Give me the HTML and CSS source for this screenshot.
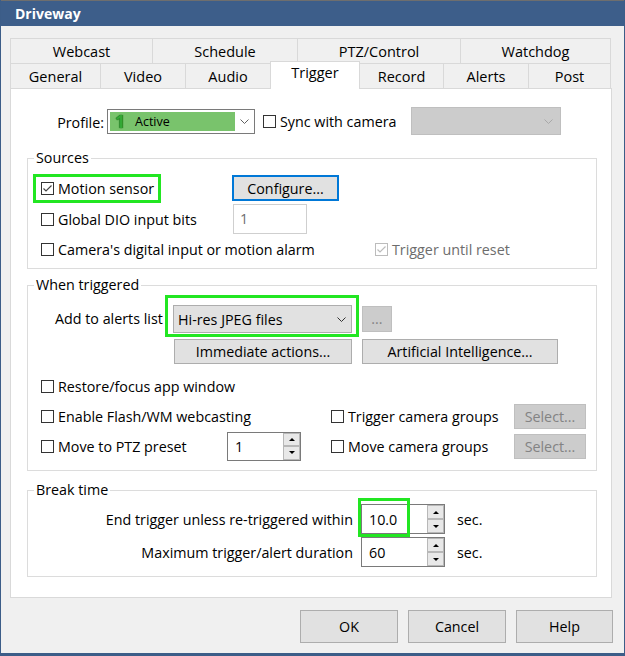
FILE: index.html
```html
<!DOCTYPE html>
<html lang="en">
<head>
  <meta charset="UTF-8">
  <title>Driveway</title>
  <link rel="stylesheet" href="styles.css">
</head>
<body>
  <div class="window">
    <div class="titlebar">Driveway</div>

    <div class="client">
      <div class="tabs">
        <div class="tab-row">
          <div class="tab w-webcast">Webcast</div>
          <div class="tab w-schedule">Schedule</div>
          <div class="tab w-ptz">PTZ/Control</div>
          <div class="tab w-watchdog">Watchdog</div>
        </div>
        <div class="tab-row">
          <div class="tab w-general">General</div>
          <div class="tab w-video">Video</div>
          <div class="tab w-audio">Audio</div>
          <div class="tab w-trigger active">Trigger</div>
          <div class="tab w-record">Record</div>
          <div class="tab w-alerts">Alerts</div>
          <div class="tab w-post">Post</div>
        </div>
      </div>

      <div class="panel">
        <div class="profile-row">
          <span class="profile-label">Profile:</span>
          <div class="combo profile-combo">
            <div class="profile-fill">
              <span class="profile-num">1</span>
              <span class="profile-name">Active</span>
            </div>
            <span class="combo-arrow">
              <svg width="9" height="5" viewBox="0 0 9 5"><polyline points="0.5,0.5 4.5,4.5 8.5,0.5" fill="none" stroke="#606060"/></svg>
            </span>
          </div>
          <label class="check sync-check"><span class="box"></span>Sync with camera</label>
          <div class="combo combo-disabled">
            <span class="combo-arrow">
              <svg width="9" height="5" viewBox="0 0 9 5"><polyline points="0.5,0.5 4.5,4.5 8.5,0.5" fill="none" stroke="#a8a8a8"/></svg>
            </span>
          </div>
        </div>

        <fieldset class="group sources">
          <legend>Sources</legend>
          <div class="row row-motion">
            <div class="highlight-box motion-box">
              <label class="check">
                <span class="box checked">
                  <svg width="11" height="11" viewBox="0 0 11 11"><polyline points="1.5,5.5 4,8 9.5,2.5" fill="none" stroke="#444" stroke-width="1.2"/></svg>
                </span>Motion sensor
              </label>
            </div>
            <button class="btn btn-focus configure-btn">Configure...</button>
          </div>
          <div class="row row-dio">
            <label class="check col-dio"><span class="box"></span>Global DIO input bits</label>
            <div class="textbox">1</div>
          </div>
          <div class="row row-camera">
            <label class="check col-camera"><span class="box"></span>Camera's digital input or motion alarm</label>
            <label class="check disabled">
              <span class="box checked">
                <svg width="11" height="11" viewBox="0 0 11 11"><polyline points="1.5,5.5 4,8 9.5,2.5" fill="none" stroke="#bcbcbc" stroke-width="1.2"/></svg>
              </span>Trigger until reset
            </label>
          </div>
        </fieldset>

        <fieldset class="group triggered">
          <legend>When triggered</legend>
          <div class="row row-alerts">
            <span class="alerts-label">Add to alerts list</span>
            <div class="alerts-wrap">
              <div class="combo alerts-combo">
                <span class="combo-text">Hi-res JPEG files</span>
                <span class="combo-arrow">
                  <svg width="9" height="5" viewBox="0 0 9 5"><polyline points="0.5,0.5 4.5,4.5 8.5,0.5" fill="none" stroke="#333"/></svg>
                </span>
              </div>
              <span class="highlight-overlay alerts-overlay"></span>
            </div>
            <button class="btn btn-disabled dots-btn">...</button>
          </div>
          <div class="row row-actions">
            <button class="btn immediate-btn">Immediate actions...</button>
            <button class="btn ai-btn">Artificial Intelligence...</button>
          </div>
          <div class="row row-check row-restore">
            <label class="check"><span class="box"></span>Restore/focus app window</label>
          </div>
          <div class="row row-check">
            <label class="check col-flash"><span class="box"></span>Enable Flash/WM webcasting</label>
            <label class="check col-groups"><span class="box"></span>Trigger camera groups</label>
            <button class="btn btn-disabled select-btn">Select...</button>
          </div>
          <div class="row row-check">
            <label class="check col-ptz"><span class="box"></span>Move to PTZ preset</label>
            <div class="spin ptz-spin">
              <span class="spin-value">1</span>
              <span class="spin-buttons"><span class="spin-btn up"></span><span class="spin-btn down"></span></span>
            </div>
            <label class="check col-groups groups-gap"><span class="box"></span>Move camera groups</label>
            <button class="btn btn-disabled select-btn">Select...</button>
          </div>
        </fieldset>

        <fieldset class="group break">
          <legend>Break time</legend>
          <div class="row row-break">
            <span class="break-label">End trigger unless re-triggered within</span>
            <div class="spin break-spin">
              <span class="spin-value">10.0</span>
              <span class="spin-buttons"><span class="spin-btn up"></span><span class="spin-btn down"></span></span>
              <span class="highlight-overlay break-overlay"></span>
            </div>
            <span class="unit">sec.</span>
          </div>
          <div class="row row-break second">
            <span class="break-label">Maximum trigger/alert duration</span>
            <div class="spin break-spin">
              <span class="spin-value">60</span>
              <span class="spin-buttons"><span class="spin-btn up"></span><span class="spin-btn down"></span></span>
            </div>
            <span class="unit">sec.</span>
          </div>
        </fieldset>
      </div>

      <div class="dialog-buttons">
        <button class="btn dialog-btn">OK</button>
        <button class="btn dialog-btn">Cancel</button>
        <button class="btn dialog-btn help-btn">Help</button>
      </div>
    </div>
  </div>
</body>
</html>
```

FILE: styles.css
```css
* {
  box-sizing: border-box;
}

body {
  margin: 0;
  font-family: "Open Sans", "Noto Sans", sans-serif;
  font-size: 14.3px;
  color: #000;
  background: #fff;
}

.window {
  width: 625px;
  height: 656px;
  background: #f0f0f0;
  border: 1px solid #3c5d88;
  border-top: 0;
  border-bottom-width: 3px;
}

.titlebar {
  height: 26px;
  background: #3d5e8a;
  border-top: 1px solid #6e6e6e;
  color: #fff;
  font-weight: 700;
  font-size: 14px;
  padding-left: 14px;
  line-height: 25px;
}

.client {
  padding: 12px 10px 0 9px;
}

/* tabs */
.tab-row {
  display: flex;
  height: 25px;
}

.tab {
  border: 1px solid #d9d9d9;
  border-bottom: 0;
  border-right: 0;
  text-align: center;
  line-height: 25px;
  font-size: 14.5px;
}

.tab:last-child {
  border-right: 1px solid #d9d9d9;
}

.tab.active {
  position: relative;
  z-index: 1;
  height: 28px;
  margin-top: -2px;
  margin-right: -1px;
  background: #fff;
  border-right: 1px solid #d9d9d9;
  line-height: 22px;
}

.w-webcast { width: 142px; }
.w-schedule { width: 145px; }
.w-ptz { width: 163px; }
.w-watchdog { width: 151px; }
.w-general { width: 90px; }
.w-video { width: 85px; }
.w-audio { width: 85px; }
.w-trigger { width: 90px; }
.w-record { width: 84px; }
.w-alerts { width: 85px; }
.w-post { width: 83px; }

.panel {
  width: 602px;
  height: 510px;
  background: #fff;
  border: 1px solid #d9d9d9;
  padding: 18px 14px 0 16px;
}

/* common controls */
.row {
  display: flex;
  align-items: center;
}

.check {
  display: flex;
  align-items: center;
  white-space: nowrap;
}

.box {
  width: 13px;
  height: 13px;
  border: 1px solid #333;
  background: #fff;
  margin-right: 4px;
  display: flex;
  align-items: center;
  justify-content: center;
  flex: none;
}

.check.disabled {
  color: #6d6d6d;
}

.check.disabled .box {
  border-color: #bcbcbc;
}

.btn {
  font: inherit;
  color: #000;
  background: #e1e1e1;
  border: 1px solid #adadad;
  padding: 0;
  height: 25px;
  white-space: nowrap;
}

.btn-focus {
  border: 2px solid #0078d7;
}

.btn-disabled {
  background: #cccccc;
  border-color: #bfbfbf;
  color: #838383;
}

.combo {
  display: flex;
  align-items: center;
  border: 1px solid #adadad;
}

.combo-arrow {
  width: 19px;
  display: flex;
  align-items: center;
  justify-content: center;
  margin-left: auto;
}

.highlight-box {
  border: 3px solid #22e622;
}

.highlight-overlay {
  position: absolute;
  border: 3px solid #22e622;
  pointer-events: none;
}

/* profile row */
.profile-row {
  display: flex;
  align-items: center;
  height: 28px;
}

.profile-label {
  width: 77px;
  margin-right: 3px;
  text-align: right;
  padding-top: 2px;
}

.profile-combo {
  width: 148px;
  height: 25px;
  border-color: #7a7a7a;
  background: #fff;
  padding: 2px 0 2px 2px;
}

.profile-fill {
  width: 125px;
  height: 19px;
  background: #79c36c;
  display: flex;
  align-items: center;
}

.profile-num {
  width: 25px;
  padding-left: 5px;
  font-weight: 700;
  font-size: 18px;
  line-height: 19px;
  color: #35a835;
  text-shadow: 0 0 1px #0d5a0d, 0 0 1px #0d5a0d;
}

.profile-name {
  font-size: 12.5px;
}

.sync-check {
  margin-left: 8px;
  width: 148px;
}

.combo-disabled {
  width: 150px;
  height: 28px;
  background: #cccccc;
  border-color: #bfbfbf;
  padding-right: 2px;
}

/* group boxes */
.group {
  margin: 0;
  padding: 0;
  width: 570px;
  min-width: 0;
  border: 1px solid #dcdcdc;
}

.group legend {
  margin-left: 6px;
  padding: 0 2px;
  line-height: 20px;
}

.sources {
  margin-top: 13px;
  padding: 5px 0;
}

.row-motion {
  height: 30px;
}

.motion-box {
  width: 128px;
  height: 29px;
  margin-left: 5px;
  padding-left: 5px;
  padding-top: 1px;
  display: flex;
  align-items: center;
}

.configure-btn {
  margin-left: 71px;
  width: 107px;
  height: 26px;
}

.row-dio {
  height: 32px;
}

.col-dio {
  width: 204px;
  padding-left: 13px;
}

.textbox {
  width: 74px;
  height: 30px;
  margin-left: 1px;
  border: 1px solid #cfcfcf;
  color: #6d6d6d;
  padding-left: 6px;
  line-height: 27px;
}

.row-camera {
  height: 28px;
  padding-top: 1px;
}

.col-camera {
  width: 347px;
  padding-left: 13px;
}

.triggered {
  margin-top: 6px;
  padding: 0 0 9px;
}

.row-alerts {
  height: 42px;
  align-items: flex-start;
  padding-left: 27px;
}

.alerts-label {
  width: 110px;
  white-space: nowrap;
  margin-top: 14px;
  line-height: 20px;
}

.alerts-wrap {
  position: relative;
  margin-left: 8px;
  margin-top: 10px;
}

.alerts-combo {
  width: 179px;
  height: 28px;
  background: #e1e1e1;
  padding-left: 4px;
}

.alerts-combo .combo-arrow {
  width: 20px;
}

.alerts-overlay {
  left: -8px;
  top: -10px;
  width: 194px;
  height: 42px;
}

.dots-btn {
  margin-left: 10px;
  margin-top: 11px;
  width: 30px;
  height: 26px;
  line-height: 18px;
}

.row-actions {
  margin-top: 2px;
  height: 25px;
  padding-left: 146px;
}

.immediate-btn {
  width: 178px;
}

.ai-btn {
  width: 196px;
  margin-left: 10px;
}

.row-check {
  height: 30px;
  padding-left: 13px;
}

.row-restore {
  margin-top: 7px;
}

.col-flash {
  width: 290px;
}

.col-groups {
  width: 183px;
}

.col-ptz {
  width: 186px;
}

.groups-gap {
  margin-left: 30px;
}

.select-btn {
  width: 72px;
}

.spin {
  position: relative;
  display: flex;
  border: 1px solid #7a7a7a;
  background: #fff;
}

.spin-value {
  flex: 1;
  padding-left: 7px;
  display: flex;
  align-items: center;
}

.spin-buttons {
  width: 17px;
  display: flex;
  flex-direction: column;
}

.spin-btn {
  flex: 1;
  background: #e8e8e8;
  border: 1px solid #b8b8b8;
  display: flex;
  align-items: center;
  justify-content: center;
}

.spin-btn.up::after {
  content: "";
  border-left: 3px solid transparent;
  border-right: 3px solid transparent;
  border-bottom: 3px solid #000;
}

.spin-btn.down::after {
  content: "";
  border-left: 3px solid transparent;
  border-right: 3px solid transparent;
  border-top: 3px solid #000;
}

.ptz-spin {
  width: 74px;
  height: 29px;
}

.break {
  margin-top: 9px;
  padding: 4px 0 9px;
}

.row-break {
  height: 30px;
}

.row-break.second {
  margin-top: 3px;
}

.break-label {
  width: 325px;
  text-align: right;
  white-space: nowrap;
}

.break-spin {
  width: 84px;
  height: 30px;
  margin-left: 8px;
}

.break-overlay {
  left: -4px;
  top: -7px;
  width: 52px;
  height: 39px;
}

.unit {
  margin-left: 12px;
}

.dialog-buttons {
  display: flex;
  justify-content: flex-end;
  gap: 10px;
  margin-top: 12px;
  padding-right: 1px;
}

.dialog-btn {
  width: 98px;
  height: 33px;
}

.help-btn {
  width: 97px;
}
```
